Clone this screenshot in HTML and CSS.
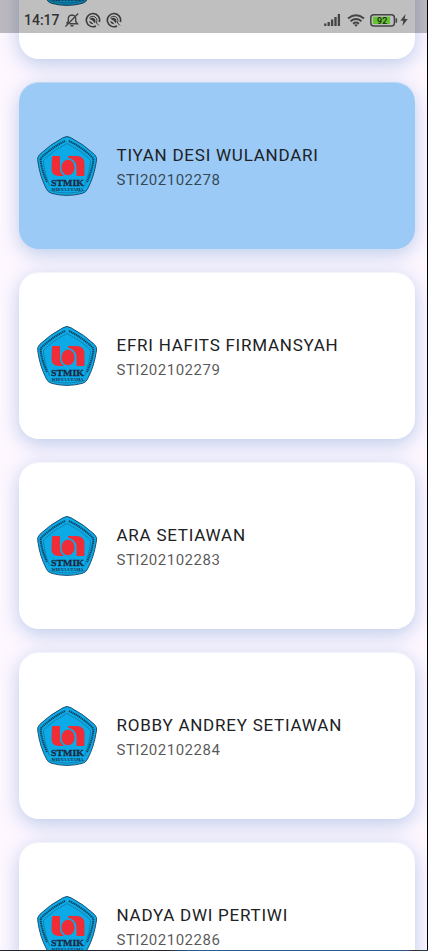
FILE: index.html
```
<!DOCTYPE html>
<html lang="id">
<head>
<meta charset="utf-8">
<title>Mahasiswa</title>
<link rel="stylesheet" href="styles.css">
</head>
<body>
<svg class="defs" width="0" height="0" aria-hidden="true">
  <defs>
    <symbol id="crest" viewBox="0 0 60 60">
      <path d="M26 1.800Q30 -.8 34 1.800Q47 8.500 57.500 18.500Q60.500 21.500 59.400 25Q57 41 50.500 53Q49 56.300 45.500 57.300Q30 61.500 14.500 57.300Q11 56.300 9.500 53Q3 41 .8 25Q-.2 21.500 2.700 18.500Q13 8.500 26 1.800Z" fill="#0cabe8" stroke="#1c4f70" stroke-width="1"/>
      <path d="M10 46Q5 35 3.700 25Q3.300 22.500 5.500 20.500Q15 11.500 28 5M32 5Q45 11.500 54.500 20.500Q56.800 22.500 56.300 25Q55 35 50 46" fill="none" stroke="#123f5c" stroke-width="2" stroke-dasharray="1.300 .6"/>
      <path d="M12.500 50Q7.500 37 6.500 27Q6 24.500 8 22.500Q18 13 30 7.500Q42 13 52 22.500Q54 24.500 53.500 27Q52.500 37 47.500 50M12.500 54.500Q30 59.500 47.500 54.500" fill="none" stroke="#176487" stroke-width=".6"/>
      <path d="M15 21Q15 20 16 20H23V33Q23 37 27 40H22Q14.500 40 14.500 33Z" fill="#f02c36"/>
      <path d="M31 20H39.500Q47.500 20 47.500 28V39Q47.500 40 46.500 40H39.500V31Q39.500 24 31 21.500Z" fill="#f02c36"/>
      <ellipse cx="31" cy="31.500" rx="7" ry="8.200" fill="#f02c36" stroke="#0cabe8" stroke-width=".8"/>
      <text x="30.500" y="49.600" textLength="33" lengthAdjust="spacingAndGlyphs" class="crest-name">STMIK</text>
      <text x="30.500" y="54.600" textLength="32" lengthAdjust="spacingAndGlyphs" class="crest-sub">WIDYA UTAMA</text>
    </symbol>
    <symbol id="whirl" viewBox="0 0 16 16">
      <path d="M11 14A6.600 6.600 0 1 1 14.300 10" fill="none" stroke="#393939" stroke-width="1.600"/>
      <path d="M4.500 5.500Q8.500 2.800 11.300 6.200Q12.500 8.500 11.500 11L14 13.500" fill="none" stroke="#393939" stroke-width="1"/>
      <path d="M4.200 7Q8.200 4.500 10.200 7.500Q11.200 9.800 9.600 11.300Q8.500 8.500 4.200 7ZM4 9Q7 9.500 8.500 12.300Q5 12.300 4 9Z" fill="#393939"/>
    </symbol>
  </defs>
</svg>
<div class="screen">
  <header class="status">
    <span class="time">14:17</span>
    <svg class="bell" width="16" height="16" viewBox="0 0 16 16"><path d="M2.500 11.500L4.300 9.500V6.500Q4.500 3.300 8 3Q11.500 3.300 11.700 6.500V9.500L13.500 11.800H5.500M6.500 13.800H9.500M1.500 14.500L14.200 1.500" fill="none" stroke="#444" stroke-width="1.400"/></svg>
    <svg class="whirl" width="16" height="16"><use href="#whirl"/></svg>
    <svg class="whirl" width="16" height="16"><use href="#whirl"/></svg>
    <span class="spacer"></span>
    <svg class="signal" width="17" height="12" viewBox="0 0 17 12"><path d="M1.300 9.500V12M4.700 8V12M8.100 5.500V12M11.500 3V12M14.900 0V12" stroke="#444" stroke-width="2.300"/></svg>
    <svg class="wifi" width="18" height="13" viewBox="0 0 18 13"><path d="M1 4.500Q9-2 17 4.500M3.500 7.200Q9 2.700 14.500 7.200M6 9.700Q9 7.300 12 9.700" fill="none" stroke="#444" stroke-width="1.800"/><path d="M7 10.800Q9 9.700 11 10.800L9 12.800Z" fill="#444"/></svg>
    <svg class="battery" width="28" height="13" viewBox="0 0 28 13"><rect x=".8" y=".8" width="23.600" height="11.200" rx="3" fill="none" stroke="#444" stroke-width="1.500"/><rect x="3" y="2.800" width="17" height="7.200" fill="#62c52c"/><path d="M26.300 4.300V8.700" stroke="#444" stroke-width="1.600"/><text x="12.200" y="9.600" class="level">92</text></svg>
    <svg class="bolt" width="8" height="12" viewBox="0 0 8 12"><path d="M5.500 0L.3 6.700H3.300L2.400 12L7.800 4.900H4.700Z" fill="#444"/></svg>
  </header>
  <main class="list">
    <article class="card"><svg class="crest"><use href="#crest"/></svg></article>
    <article class="card selected"><svg class="crest"><use href="#crest"/></svg><div class="info"><h2>TIYAN DESI WULANDARI</h2><p>STI202102278</p></div></article>
    <article class="card"><svg class="crest"><use href="#crest"/></svg><div class="info"><h2>EFRI HAFITS FIRMANSYAH</h2><p>STI202102279</p></div></article>
    <article class="card"><svg class="crest"><use href="#crest"/></svg><div class="info"><h2>ARA SETIAWAN</h2><p>STI202102283</p></div></article>
    <article class="card"><svg class="crest"><use href="#crest"/></svg><div class="info"><h2>ROBBY ANDREY SETIAWAN</h2><p>STI202102284</p></div></article>
    <article class="card"><svg class="crest"><use href="#crest"/></svg><div class="info"><h2>NADYA DWI PERTIWI</h2><p>STI202102286</p></div></article>
  </main>
</div>
<div class="edge"></div>
</body>
</html>
```
FILE: styles.css
```
* { box-sizing: border-box; }
body { margin: 0; font-family: Roboto, sans-serif; background: #000; }
.defs { position: absolute; }
.screen {
  position: relative;
  width: 427px;
  height: 950px;
  overflow: hidden;
  background: #fef7ff;
}
.edge { height: 1px; background: linear-gradient(90deg, #25232b 0 165px, #2a5b91 190px 408px, #3a2d2c 412px, #28405a); }
.status {
  position: absolute;
  z-index: 2;
  top: 0;
  left: 0;
  width: 427px;
  height: 33px;
  padding: 7px 19px 0 24px;
  display: flex;
  align-items: center;
  background: rgba(0, 0, 0, .25);
}
.time { font-size: 14px; font-weight: 500; line-height: 16px; color: #333; width: 40px; }
.bell { margin-right: 5px; }
.whirl { margin-right: 5px; }
.spacer { flex: 1; }
.wifi { margin: 0 5px 0 6px; }
.bolt { margin-left: 2px; }
.level { font: 500 9px Roboto, sans-serif; fill: #222; text-anchor: middle; }
.list {
  display: flex;
  flex-direction: column;
  gap: 23px;
  padding: 0 12px 0 19px;
  margin-top: -108px;
}
.card {
  flex: none;
  height: 167px;
  padding-left: 18px;
  display: flex;
  align-items: center;
  gap: 19.500px;
  border-radius: 20px;
  background: #fff;
  box-shadow: 0 5px 20px rgba(92, 142, 205, .42), inset 0 1px rgba(228, 230, 245, .45);
}
.selected { background: #9acaf5; }
.crest { width: 60px; height: 60px; flex: none; }
.crest-name { font: 700 9px "Liberation Serif", serif; fill: #1c2940; stroke: #1c2940; stroke-width: .3px; text-anchor: middle; }
.crest-sub { font: 700 5px "Liberation Serif", serif; fill: #1c2940; text-anchor: middle; }
.info { padding-top: 5px; }
h2 { margin: 0; font-size: 17px; font-weight: 400; line-height: 25px; letter-spacing: .76px; color: #202124; }
p { margin: 0; font-size: 15px; font-weight: 400; line-height: 25px; letter-spacing: .5px; color: #000a; }
```
